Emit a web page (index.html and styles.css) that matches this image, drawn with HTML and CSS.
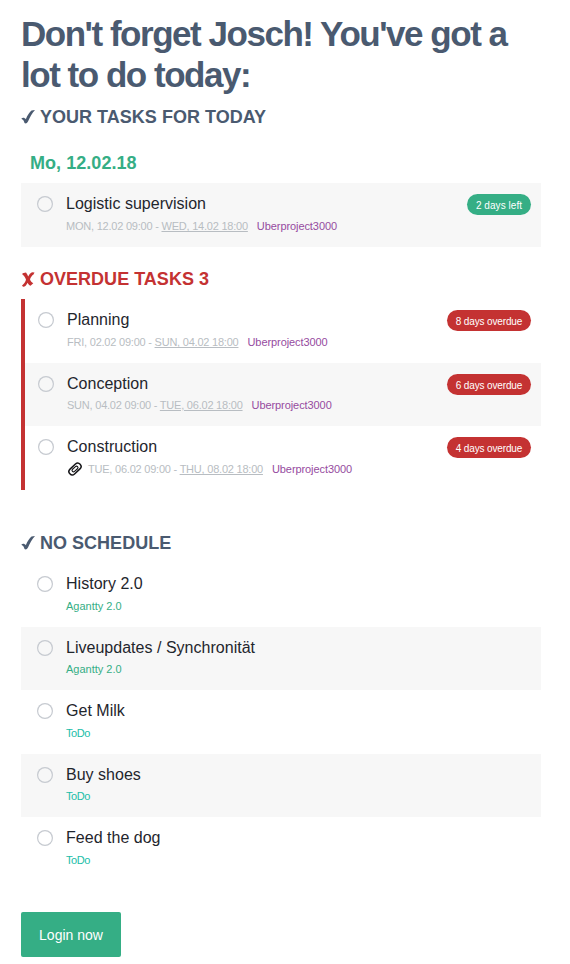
FILE: index.html
```html
<!DOCTYPE html>
<html lang="en">
<head>
<meta charset="utf-8">
<title>Tasks for today</title>
<link rel="stylesheet" href="styles.css">
</head>
<body>
<main>
  <h1>Don't forget Josch! You've got a lot to do today:</h1>
  <h2><svg class="mark" viewBox="0 0 15 16"><path d="M.3 9.800C1.500 8.200 3.500 8.200 4.800 10.200C6.500 6 8.500 3.200 10.500 1.500L14 1C11 4 9 8 7 12.500C6 14.500 4.500 15 3.500 14C3 11.800 2 10.500 .3 9.800Z"/></svg>YOUR TASKS FOR TODAY</h2>
  <h3>Mo, 12.02.18</h3>
  <section class="today">
    <article class="task shaded"><i class="circle"></i><div class="body"><div class="name">Logistic supervision</div><div class="meta"><span class="dates">MON, 12.02 09:00 - <u>WED, 14.02 18:00</u></span><span class="purple">Uberproject3000</span></div></div><span class="badge green">2 days left</span></article>
  </section>
  <h2 class="red"><svg class="mark" viewBox="0 0 15 16"><path d="M1.500 2.200L5 1.500C6 3 6.700 4.200 7.200 5.500C8.300 3.500 9.500 2 11 1.300L13.500 1.500L12.500 3.500C11 4.300 9.800 6.200 9 8.300C9.700 10.300 10.700 11.700 12.300 12.200L9.500 14.800C8 14 7.200 13 6.700 11.700C5.300 14 4 16 2 15.800L1 14.500C3 13 4.200 11 5 8.700C4.200 6.500 3.200 4.500 1.500 3.800Z"/></svg>OVERDUE TASKS 3</h2>
  <section class="overdue">
    <article class="task"><i class="circle"></i><div class="body"><div class="name">Planning</div><div class="meta"><span class="dates">FRI, 02.02 09:00 - <u>SUN, 04.02 18:00</u></span><span class="purple">Uberproject3000</span></div></div><span class="badge">8 days overdue</span></article>
    <article class="task shaded"><i class="circle"></i><div class="body"><div class="name">Conception</div><div class="meta raised"><span class="dates">SUN, 04.02 09:00 - <u>TUE, 06.02 18:00</u></span><span class="purple">Uberproject3000</span></div></div><span class="badge">6 days overdue</span></article>
    <article class="task"><i class="circle"></i><div class="body"><div class="name">Construction</div><div class="meta"><svg class="clip" viewBox="0 0 16 14"><g transform="rotate(-43 8 7)" fill="none" stroke="#151518"><rect x="1" y="3.700" width="14" height="6.600" rx="3.300" stroke-width="1.500"/><rect x="4.500" y="5.500" width="7" height="3" rx="1.500" stroke-width="1.100"/></g></svg><span class="dates">TUE, 06.02 09:00 - <u>THU, 08.02 18:00</u></span><span class="purple">Uberproject3000</span></div></div><span class="badge">4 days overdue</span></article>
  </section>
  <h2><svg class="mark" viewBox="0 0 15 16"><path d="M.3 9.800C1.500 8.200 3.500 8.200 4.800 10.200C6.500 6 8.500 3.200 10.500 1.500L14 1C11 4 9 8 7 12.500C6 14.500 4.500 15 3.500 14C3 11.800 2 10.500 .3 9.800Z"/></svg>NO SCHEDULE</h2>
  <section class="unscheduled">
    <article class="task"><i class="circle"></i><div class="body"><div class="name">History 2.0</div><div class="meta agantty">Agantty 2.0</div></div></article>
    <article class="task shaded"><i class="circle"></i><div class="body"><div class="name">Liveupdates / Synchronität</div><div class="meta raised agantty">Agantty 2.0</div></div></article>
    <article class="task"><i class="circle"></i><div class="body"><div class="name">Get Milk</div><div class="meta todo">ToDo</div></div></article>
    <article class="task shaded"><i class="circle"></i><div class="body"><div class="name">Buy shoes</div><div class="meta raised todo">ToDo</div></div></article>
    <article class="task"><i class="circle"></i><div class="body"><div class="name">Feed the dog</div><div class="meta todo">ToDo</div></div></article>
  </section>
  <a class="login">Login now</a>
</main>
</body>
</html>
```
FILE: styles.css
```css
* { box-sizing: border-box; }
body { margin: 0; background: #fff; font-family: "Liberation Sans", Arial, sans-serif; }
main { width: 520px; margin-left: 21px; padding-top: 13px; }
h1 { margin: 0; font-size: 35px; line-height: 41px; letter-spacing: -1.47px; color: #4a5a70; }
h2 { margin: 11px 0 0; height: 22px; display: flex; align-items: center; gap: 4px; font-size: 18px; line-height: 22px; letter-spacing: .02px; color: #4a5a70; white-space: nowrap; }
.mark { width: 15px; height: 16px; fill: currentColor; }
h3 { margin: 24px 0 0 9px; height: 31px; font-size: 18px; line-height: 22px; letter-spacing: .05px; color: #35ae85; }
.today { height: 64px; margin-bottom: 21px; }
h2.red { color: #c43232; }
.overdue { margin-top: 9px; height: 191px; border-left: 4px solid #c43232; margin-bottom: 42px; }
.unscheduled { margin-top: 9px; height: 317px; margin-bottom: 32px; }
.task { height: 63.5px; display: flex; align-items: flex-start; padding: 11px 10px 0 16px; }
.today .task { height: 64px; }
.overdue .task { padding-left: 13px; }
.shaded { background: #f7f7f7; }
.circle { width: 16px; height: 16px; border-radius: 50%; box-shadow: inset 0 0 0 1.2px #c6cad0; margin: 2px 13px 0 0; }
.body { flex: 1; }
.name { font-size: 16px; line-height: 20px; letter-spacing: .02px; color: #1f262d; }
.meta { margin-top: 5px; display: flex; align-items: center; height: 14px; font-size: 11px; line-height: 14px; color: #b8bdc2; white-space: nowrap; }
.raised { margin-top: 4px; }
.dates { letter-spacing: -.22px; }
.purple { margin-left: 9px; color: #964ba0; letter-spacing: -.08px; }
.clip { width: 16px; height: 14px; margin-right: 5px; }
.agantty { color: #35ae85; }
.todo { color: #20bda8; letter-spacing: -.4px; }
.badge { width: 84px; height: 21px; border-radius: 11px; background: #c43232; color: #fff; text-align: center; font-size: 10px; line-height: 23px; letter-spacing: -.14px; white-space: nowrap; }
.green { width: 64px; letter-spacing: .05px; background: #35ae85; }
.login { display: block; width: 100px; height: 45px; border-radius: 2px; background: #35ae85; color: #fff; text-align: center; font-size: 14px; line-height: 46px; }
```
